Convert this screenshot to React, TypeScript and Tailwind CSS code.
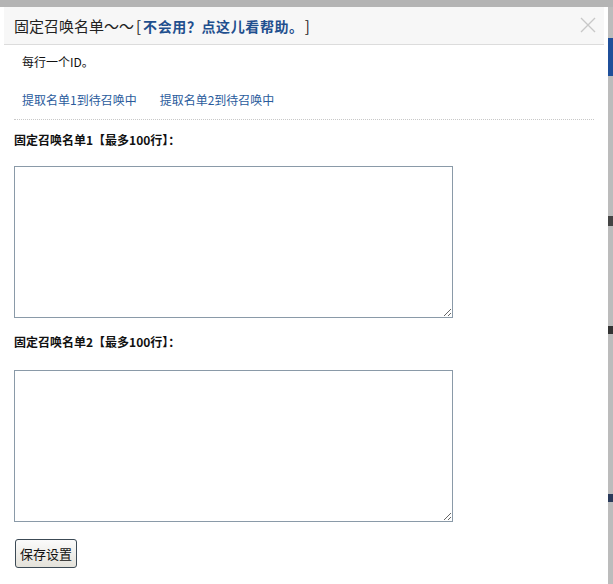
import React from 'react'

const cjk = { fontFamily: '"Noto Sans CJK SC", "Liberation Sans", sans-serif' }

export default function App() {
  return (
    <div className="w-[613px] h-[584px] overflow-hidden flex flex-col bg-[#b9b9b9]" style={cjk}>
      {/* page behind the dialog */}
      <div className="h-[7px] bg-[#b4b4b4] shrink-0" />
      <div className="flex flex-1 min-h-0">
        <div className="w-[608px] bg-white px-[4px] flex flex-col">
          {/* Header */}
          <div className="h-[38px] bg-[#f7f7f7] border-b border-[#dcdcdc] flex items-center pl-[10px] pr-[10px] shrink-0">
            <h2 className="text-[15px] text-[#222] flex-1 leading-none">
              固定召唤名单～～<span className="mx-[2px]">[</span>
              <span className="text-[#1f4f8e] font-bold text-[14px] tracking-[0.6px]">不会用？点这儿看帮助。</span>
              <span className="ml-[8px]">]</span>
            </h2>
            <svg width="16" height="16" viewBox="0 0 16 16" className="mr-[-2px] mt-[-2px]">
              <path d="M1 1 L15 15 M15 1 L1 15" stroke="#c8c8c8" strokeWidth="1.4" fill="none" />
            </svg>
          </div>

          {/* Body */}
          <div className="pl-[10px] pr-[10px] text-[12px] leading-[16px] text-[#111]">
            <p className="mt-[9px] pl-[8px]">每行一个ID。</p>
            <div className="mt-[22px] pl-[8px] flex gap-[23px] text-[#2a5b9c]">
              <a className="cursor-pointer">提取名单1到待召唤中</a>
              <a className="cursor-pointer">提取名单2到待召唤中</a>
            </div>
            <div className="mt-[11px] border-t border-dotted border-[#c8c8c8]" />

            <p className="mt-[12px] font-bold">固定召唤名单1【最多100行】：</p>
            <textarea className="block mt-[18px] w-[439px] h-[152px] border border-[#8a9aa8] bg-white outline-none" />

            <p className="mt-[16px] font-bold">固定召唤名单2【最多100行】：</p>
            <textarea className="block mt-[20px] w-[439px] h-[152px] border border-[#8a9aa8] bg-white outline-none" />

            <button className="mt-[17px] ml-[1px] h-[29px] px-[4px] text-[13px] text-[#111] border border-[#3c4a55] rounded-[3px] bg-gradient-to-b from-[#fbfbfb] to-[#e4e2da]">
              保存设置
            </button>
          </div>
        </div>

        {/* right edge of the page behind */}
        <div className="w-[5px] flex flex-col bg-[#bcbcbc]">
          <div className="h-[31px]" />
          <div className="h-[38px] bg-[#1f4f9a]" />
          <div className="h-[140px]" />
          <div className="h-[10px] bg-[#444]" />
          <div className="h-[100px]" />
          <div className="h-[8px] bg-[#333]" />
          <div className="h-[160px]" />
          <div className="h-[8px] bg-[#2a3a5a]" />
        </div>
      </div>
    </div>
  )
}
